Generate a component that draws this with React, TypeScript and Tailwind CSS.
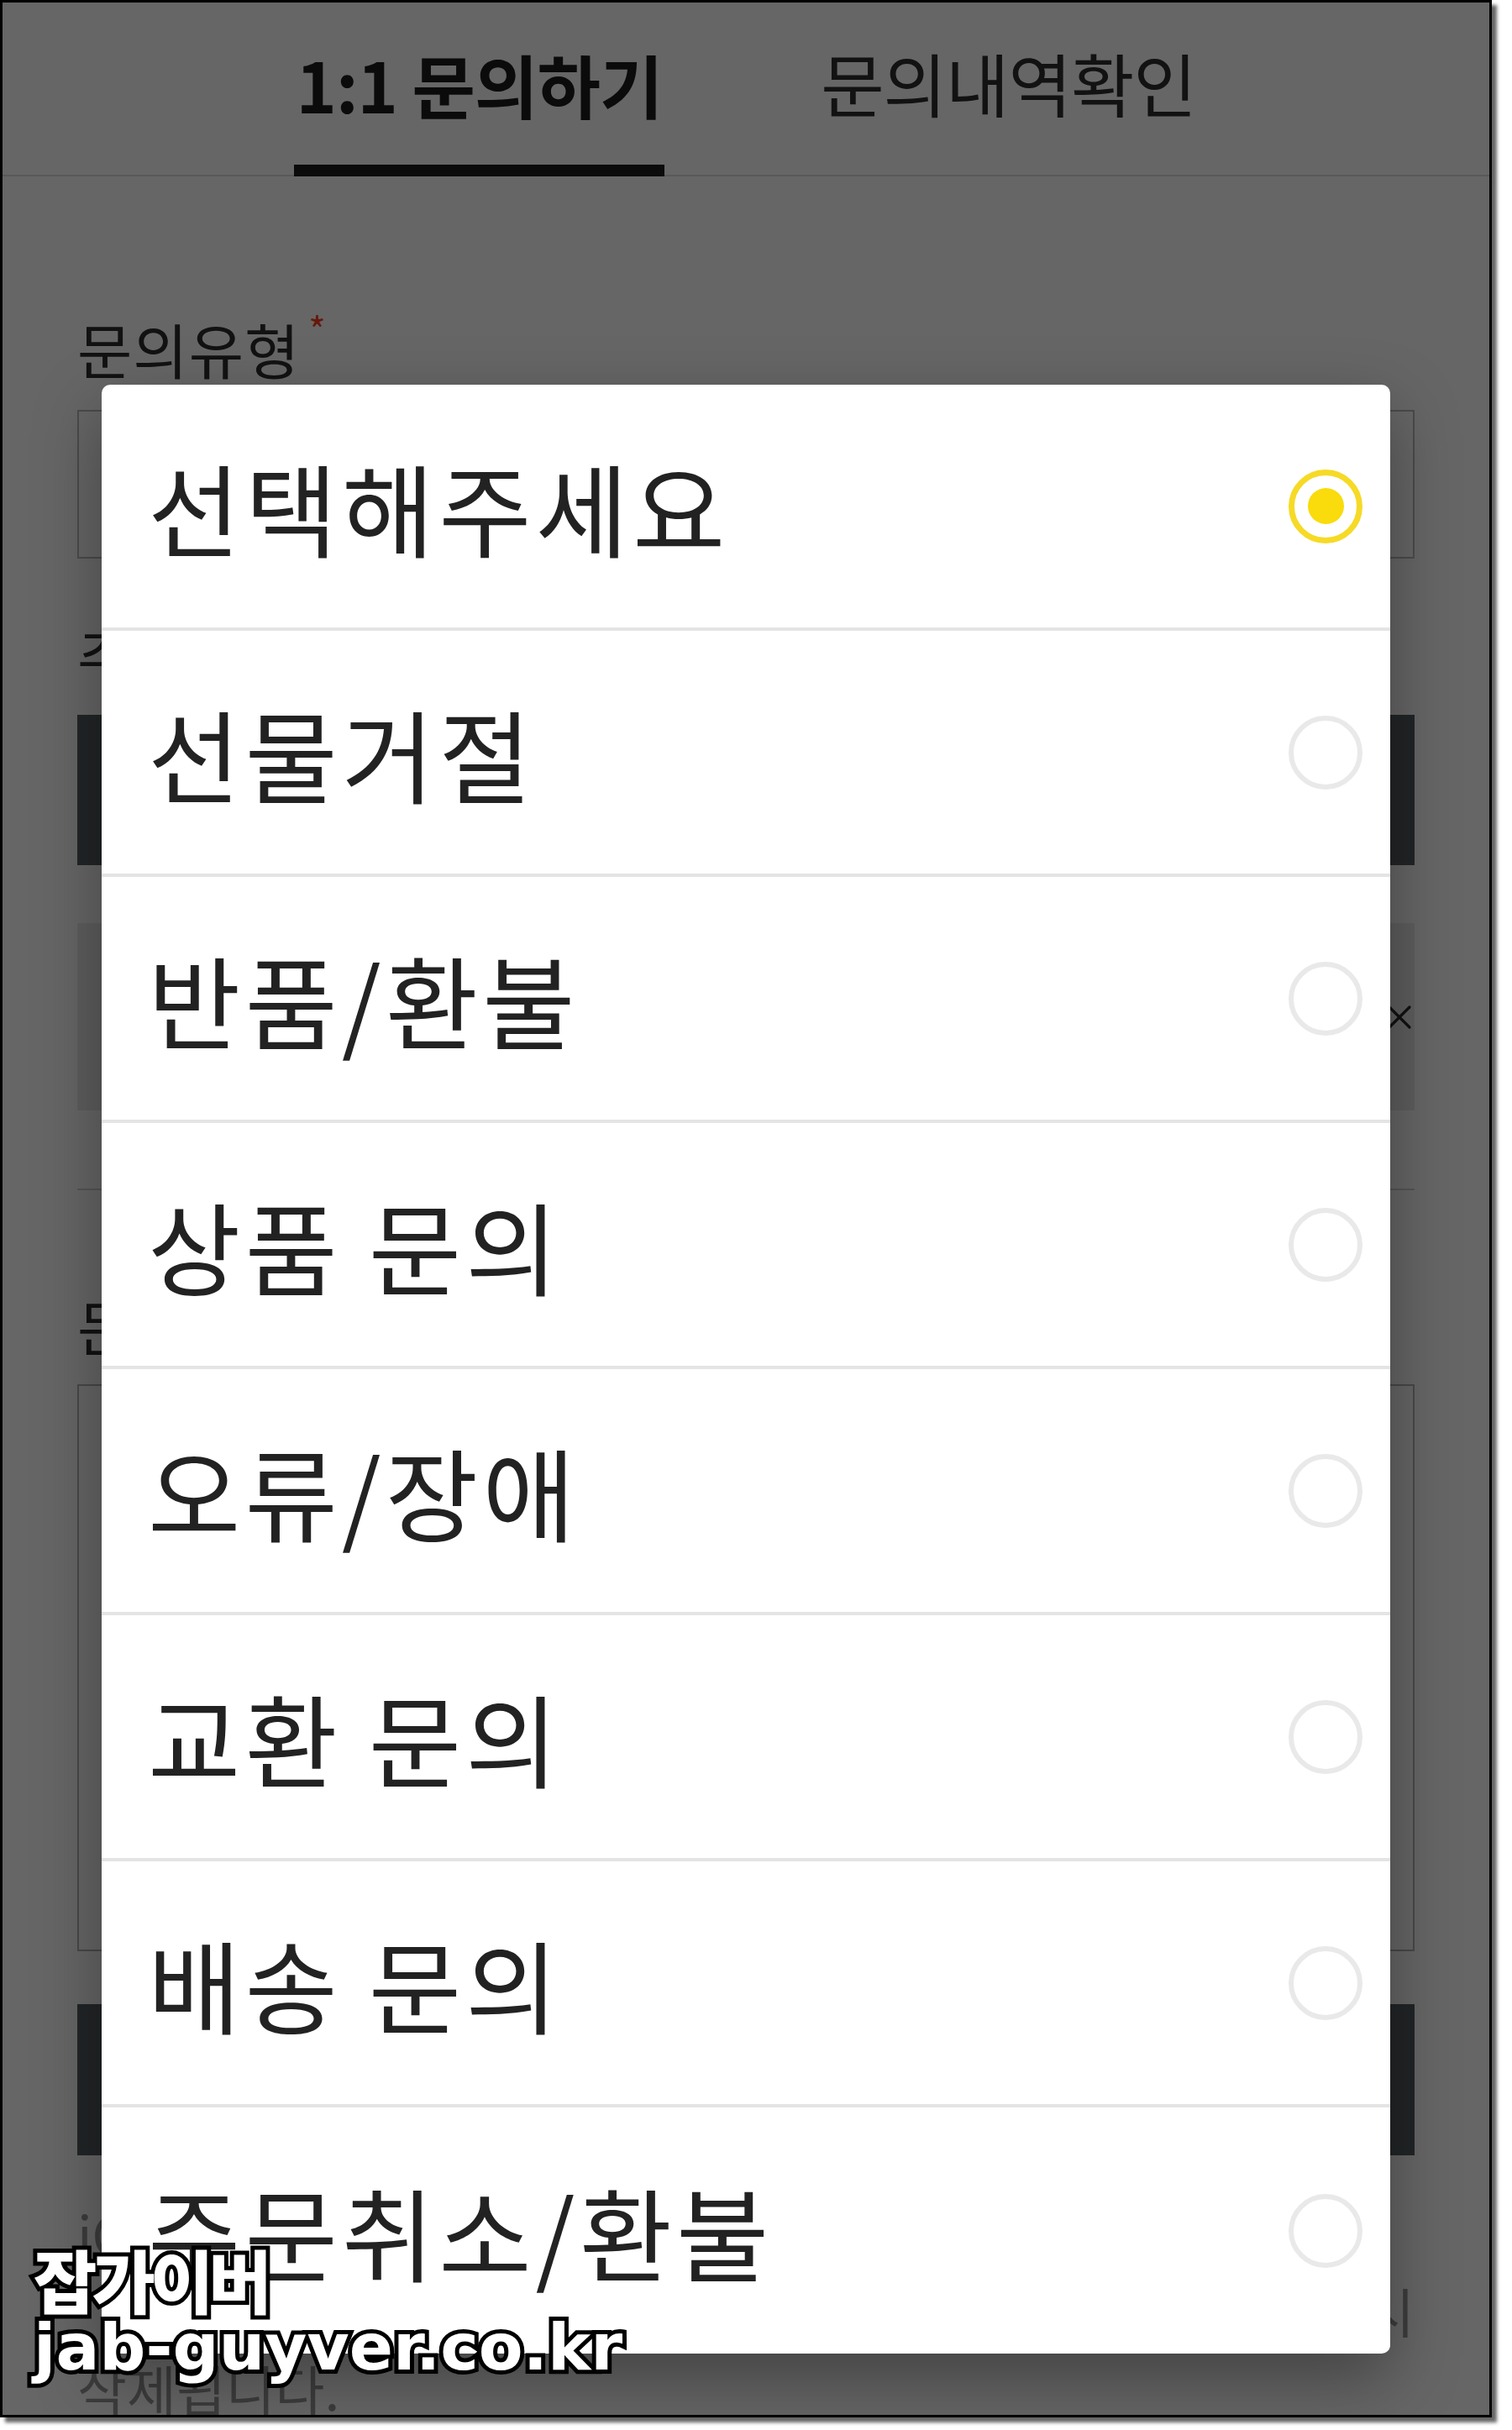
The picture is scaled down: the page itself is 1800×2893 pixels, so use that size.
import { X } from 'lucide-react';

const options = [
  '선택해주세요',
  '선물거절',
  '반품/환불',
  '상품 문의',
  '오류/장애',
  '교환 문의',
  '배송 문의',
  '주문취소/환불',
];

const kr = "font-['Noto_Sans_CJK_KR','Noto_Sans',sans-serif]";

function Radio({ checked }: { checked: boolean }) {
  if (checked) {
    return (
      <span className="flex h-[88px] w-[88px] items-center justify-center rounded-full border-[7px] border-[#f6da26]">
        <span className="h-[43px] w-[43px] rounded-full bg-[#fadb0c]" />
      </span>
    );
  }
  return <span className="block h-[88px] w-[88px] rounded-full border-[6px] border-[#e9e9e9]" />;
}

export default function App() {
  return (
    <div className={`relative h-[2893px] w-[1800px] bg-white ${kr}`}>
      {/* screenshot frame */}
      <div className="relative h-[2878px] w-[1776px] overflow-hidden border-[3px] border-black bg-white shadow-[6px_6px_4px_rgba(0,0,0,0.6)]">
        {/* page behind the sheet */}
        <div className="flex h-[207px] items-end justify-center gap-[184px] border-b-2 border-[#dedede]">
          <div className="-mb-[2px] flex w-[441px] flex-col items-center">
            <span className="text-[82px] font-bold leading-none tracking-[-1px] text-[#1c1c1c]">1:1 문의하기</span>
            <span className="mt-[55px] h-[14px] w-full bg-[#1c1c1c]" />
          </div>
          <div className="flex w-[451px] flex-col items-center pb-[69px]">
            <span className="text-[82px] leading-none tracking-[-1px] text-[#2e2e2e]">문의내역확인</span>
          </div>
        </div>

        <div className="px-[89px]">
          <div className="mt-[169px] flex items-start text-[71px] leading-none tracking-[1px] text-[#2e2e2e]">
            문의유형<span className="ml-[10px] -mt-[10px] text-[44px] text-[#ff3d1f]">*</span>
          </div>
          <div className="mt-[38px] h-[177px] border-2 border-[#bbb]" />

          <div className="mt-[79px] text-[71px] leading-none text-[#2e2e2e]">주문상품</div>
          <div className="mt-[36px] h-[179px] bg-[#565c62]" />

          <div className="mt-[69px] flex h-[223px] items-center justify-end bg-[#ececec]">
            <X className="-mr-[6px] h-[48px] w-[48px] text-[#2b2b2b]" strokeWidth={1.6} />
          </div>
          <div className="mt-[93px] h-[2px] bg-[#d5d5d5]" />

          <div className="mt-[125px] text-[71px] leading-none text-[#2e2e2e]">문의내용</div>
          <div className="mt-[35px] h-[675px] border-2 border-[#b5b5b5]" />
          <div className="mt-[63px] h-[180px] bg-[#565c62]" />

          <div className="mt-[46px] text-[64px] leading-[92px] text-[#999]">
            <div className="whitespace-nowrap">iOS 및 Android 앱에서 작성한 문의 내역은</div>
            <div className="whitespace-nowrap text-right">일정 기간 보관 후 정기적으로 일시</div>
            <div className="whitespace-nowrap">삭제됩니다.</div>
          </div>
        </div>

        {/* dim */}
        <div className="absolute inset-0 bg-black/60" />

        {/* option sheet */}
        <div className="absolute left-[118px] top-[455px] w-[1534px] overflow-hidden rounded-[10px] bg-white shadow-[0_30px_80px_rgba(0,0,0,0.35)]">
          {options.map((o, i) => (
            <div
              key={o}
              className={`flex h-[293px] items-center justify-between pl-[55px] pr-[33px] ${
                i < options.length - 1 ? 'border-b-4 border-[#e4e4e4]' : ''
              }`}
            >
              <span className="text-[120px] leading-none tracking-[5px] text-[#222]">{o}</span>
              <Radio checked={i === 0} />
            </div>
          ))}
        </div>
      </div>

      {/* watermark */}
      <div className="absolute left-[40px] top-[2670px] text-white [-webkit-text-stroke:10px_#000] [paint-order:stroke_fill]">
        <div className="text-[82px] font-black leading-[86px] tracking-[-6px]">잡가이버</div>
        <div className="font-['DejaVu_Sans',sans-serif] text-[77px] font-bold leading-[78px] tracking-[0px]">jab-guyver.co.kr</div>
      </div>
    </div>
  );
}
